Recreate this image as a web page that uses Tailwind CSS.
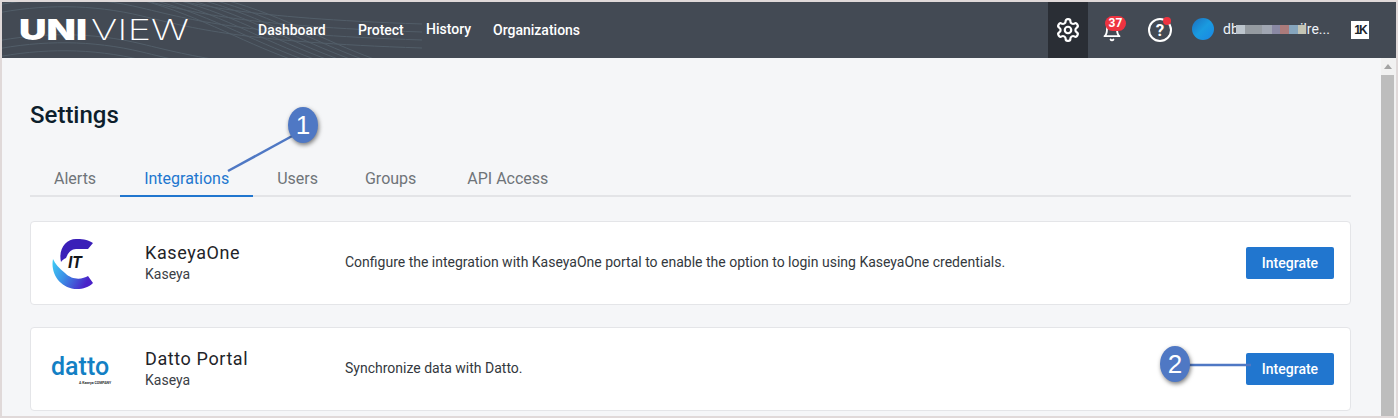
<!DOCTYPE html>
<html lang="en">
<head>
    <meta charset="UTF-8">
    <title>Settings - Integrations</title>
    <script src="https://cdn.jsdelivr.net/npm/@tailwindcss/browser@4"></script>
</head>
<body class="font-['Roboto',sans-serif] bg-[#e0d9d9] overflow-hidden">
    <div class="relative h-[418px] border-2 border-[#e0d9d9] overflow-hidden">
        <!-- Header -->
        <header class="relative h-[56px] bg-[#434a54] flex items-stretch text-white overflow-hidden">
            <svg class="absolute left-0 top-0" width="420" height="56" viewBox="0 0 420 56" fill="none" stroke="#525e69" stroke-width="1">
                <defs>
                    <path id="wave-a" d="M-10 12 C40 2 90 2 140 14 S240 40 420 46"/>
                    <path id="wave-b" d="M100 -10 C170 0 220 30 270 50 S330 70 360 70"/>
                </defs>
                <use href="#wave-a" y="-24"/><use href="#wave-a" y="-16"/><use href="#wave-a" y="-8"/><use href="#wave-a"/>
                <use href="#wave-a" y="28"/><use href="#wave-a" y="36"/><use href="#wave-a" y="44"/>
                <use href="#wave-b" x="0"/><use href="#wave-b" x="12"/><use href="#wave-b" x="24"/><use href="#wave-b" x="36"/>
                <use href="#wave-b" x="48"/><use href="#wave-b" x="60"/><use href="#wave-b" x="72"/><use href="#wave-b" x="84"/>
            </svg>
            <svg class="absolute left-[17px] top-[4px]" width="172" height="44" viewBox="0 0 172 44">
                <text x="0" y="34" textLength="68" lengthAdjust="spacingAndGlyphs" font-family="Inter" font-weight="900" font-size="28" fill="#fff">UNI</text>
                <text x="72" y="34" textLength="98" lengthAdjust="spacingAndGlyphs" font-family="Inter" font-weight="200" font-size="28" fill="#fff">VIEW</text>
            </svg>
            <nav class="relative ml-[256px] flex items-center text-sm font-medium">
                <a class="w-[100px] -mt-[1px]">Dashboard</a>
                <a class="w-[68px] -mt-[1px]">Protect</a>
                <a class="w-[67px] -mt-[3px]">History</a>
                <a class="-mt-[1px]">Organizations</a>
            </nav>
            <div class="relative ml-auto flex items-stretch">
                <div class="w-[40px] bg-[#2a2e35] flex items-center justify-center">
                    <svg class="w-[26px] h-[26px]" viewBox="0 0 24 24" fill="none" stroke="#fff" stroke-width="2" stroke-linecap="round" stroke-linejoin="round">
                        <path d="M12.22 2h-.44a2 2 0 0 0-2 2v.18a2 2 0 0 1-1 1.73l-.43.25a2 2 0 0 1-2 0l-.15-.08a2 2 0 0 0-2.73.73l-.22.38a2 2 0 0 0 .73 2.73l.15.1a2 2 0 0 1 1 1.72v.51a2 2 0 0 1-1 1.74l-.15.09a2 2 0 0 0-.73 2.73l.22.38a2 2 0 0 0 2.73.73l.15-.08a2 2 0 0 1 2 0l.43.25a2 2 0 0 1 1 1.73V20a2 2 0 0 0 2 2h.44a2 2 0 0 0 2-2v-.18a2 2 0 0 1 1-1.73l.43-.25a2 2 0 0 1 2 0l.15.08a2 2 0 0 0 2.73-.73l.22-.39a2 2 0 0 0-.73-2.73l-.15-.08a2 2 0 0 1-1-1.74v-.5a2 2 0 0 1 1-1.74l.15-.09a2 2 0 0 0 .73-2.73l-.22-.38a2 2 0 0 0-2.73-.73l-.15.08a2 2 0 0 1-2 0l-.43-.25a2 2 0 0 1-1-1.73V4a2 2 0 0 0-2-2z"/>
                        <circle cx="12" cy="12" r="3"/>
                    </svg>
                </div>
                <div class="relative w-[48px]">
                    <svg class="absolute left-[14px] top-[20px] w-[20px] h-[20px]" viewBox="0 0 24 24" fill="none" stroke="#fff" stroke-width="2.2" stroke-linecap="round" stroke-linejoin="round">
                        <path d="M6 8a6 6 0 0 1 12 0c0 7 3 9 3 9H3s3-2 3-9"/>
                        <path d="M10.3 21a1.94 1.94 0 0 0 3.4 0"/>
                    </svg>
                    <span class="absolute left-[17px] top-[14px] w-[21px] h-[15px] rounded-full bg-[#ee3340] text-white text-xs font-bold leading-[15px] text-center">37</span>
                </div>
                <div class="relative w-[48px]">
                    <svg class="absolute left-[11px] top-[15px]" width="26" height="26" viewBox="0 0 26 26" fill="none" stroke="#fff" stroke-width="2">
                        <circle cx="13" cy="13" r="11"/>
                    </svg>
                    <span class="absolute left-[11px] top-[15px] w-[26px] h-[26px] text-center text-[17px] font-bold leading-[26px]">?</span>
                    <span class="absolute left-[27px] top-[15px] w-[8px] h-[8px] rounded-full bg-[#ee3340]"></span>
                </div>
                <div class="w-[22px] h-[22px] mt-[16px] ml-[8px] rounded-full bg-gradient-to-br from-[#1b6fbe] via-[#1a9be0] to-[#1b86e4]"></div>
                <div class="relative w-[107px] ml-[9px] text-sm leading-[56px] -mt-[1px] text-[#eef3f8]">
                    <span>db</span>
                    <span class="absolute left-[77px] top-0">ilre...</span>
                    <div class="absolute left-[13px] top-[24px] h-[9px] flex">
                        <i class="block w-[9px] bg-[#bcc5cd]"></i><i class="block w-[17px] bg-[#959ba1]"></i><i class="block w-[10px] bg-[#a0a6b2]"></i><i class="block w-[8px] bg-[#8a89a4]"></i><i class="block w-[9px] bg-[#ab7b7b]"></i><i class="block w-[9px] bg-[#86a5bd]"></i><i class="block w-[8px] bg-[#c4c4b4]"></i>
                    </div>
                </div>
                <div class="w-[66px] pl-[21px] pt-[19px]">
                    <span class="block w-[18px] h-[18px] bg-white text-[#20262c] text-[12px] font-bold leading-[18px] text-center tracking-[-2px] font-['Liberation_Sans',sans-serif]">1K</span>
                </div>
            </div>
        </header>

        <div class="flex h-[358px]">
            <!-- Main -->
            <main class="w-[1379px] shrink-0 bg-[#f5f6f8] pl-[28px] pr-[30px] overflow-hidden">
                <h1 class="pt-[42px] text-2xl leading-[30px] font-medium text-[#0d1e2c]">Settings</h1>
                <div class="mt-[26px] flex h-[41px] border-b-2 border-[#e3e4e7] text-base text-[#6f7479]">
                    <a class="px-6 pt-[11px]">Alerts</a>
                    <a class="px-6 pt-[11px] text-[#2176cf] border-b-2 border-[#2176cf] h-[41px]">Integrations</a>
                    <a class="px-6 pt-[11px]">Users</a>
                    <a class="pl-[23px] pr-6 pt-[11px]">Groups</a>
                    <a class="pl-[27px] pr-6 pt-[11px]">API Access</a>
                </div>

                <div class="mt-[24px] h-[84px] bg-white border border-[#e4e5e8] rounded flex items-center">
                    <div class="w-[114px] shrink-0 pl-[20px]">
                        <div class="relative w-[44px] h-[52px]">
                            <svg width="44" height="52" viewBox="50 236 44 52">
                                <defs>
                                    <linearGradient id="it-grad" x1="0" y1="0" x2="1" y2="0.4">
                                        <stop offset="0" stop-color="#3fd0f5"/>
                                        <stop offset="0.45" stop-color="#3b8fe6"/>
                                        <stop offset="1" stop-color="#4a22c8"/>
                                    </linearGradient>
                                </defs>
                                <path fill="url(#it-grad)" d="M52 258C49 273 60 288 76 288C82 288 88 286 92 282L87 275C82 278 72 280 64 272C58 267 54 263 52 258Z"/>
                                <path fill="#3a1fb8" d="M92 242C86 238 80 238 75 238C65 238 57 248 60 261C61 259 63 258 65 257C67 252 70 248 75 248C80 248 84 248 87 248Z"/>
                            </svg>
                            <span class="absolute left-[17px] top-[17px] text-[16px] leading-[18px] font-bold italic text-[#14161a]">IT</span>
                        </div>
                    </div>
                    <div class="w-[200px] shrink-0 pb-[1px]">
                        <div class="text-lg leading-[24px] tracking-[0.6px] text-[#1f2429]">KaseyaOne</div>
                        <div class="text-sm leading-[19px] text-[#3b4046]">Kaseya</div>
                    </div>
                    <p class="flex-1 text-sm text-[#33383d] pb-[3px]">Configure the integration with KaseyaOne portal to enable the option to login using KaseyaOne credentials.</p>
                    <button class="mr-[16px] w-[88px] h-[32px] rounded-[2px] bg-[#2176cf] text-white text-sm font-medium">Integrate</button>
                </div>

                <div class="mt-[22px] h-[84px] bg-white border border-[#e4e5e8] rounded flex items-center">
                    <div class="w-[114px] shrink-0 pl-[20px]">
                        <div class="text-[25px] leading-[26px] font-medium text-[#1380c4] pt-[1px]">datto</div>
                        <div class="text-[3.5px] leading-[6px] pl-[28px] font-bold text-[#2b2f33] whitespace-nowrap">A Kaseya COMPANY</div>
                    </div>
                    <div class="w-[200px] shrink-0 pb-[1px]">
                        <div class="text-lg leading-[24px] tracking-[0.6px] text-[#1f2429]">Datto Portal</div>
                        <div class="text-sm leading-[19px] text-[#3b4046]">Kaseya</div>
                    </div>
                    <p class="flex-1 text-sm text-[#33383d] pb-[3px]">Synchronize data with Datto.</p>
                    <button class="mr-[16px] w-[88px] h-[32px] rounded-[2px] bg-[#2176cf] text-white text-sm font-medium">Integrate</button>
                </div>
            </main>

            <!-- Scrollbar -->
            <div class="flex-1 bg-[#f1f1f1] flex flex-col items-stretch">
                <div class="h-[17px] flex items-center justify-center pr-[2px]">
                    <span class="w-0 h-0 border-x-[4px] border-x-transparent border-b-[5px] border-b-[#a3a3a3]"></span>
                </div>
                <div class="flex-1 bg-[#bdbdbd] mr-[2px]"></div>
            </div>
        </div>

        <!-- Annotations -->
        <svg class="absolute left-0 top-0 pointer-events-none" width="1394" height="414" fill="none" stroke="#4f78c4" stroke-width="2.5">
            <path d="M226 169L292 133"/>
            <path d="M1186 363H1249"/>
        </svg>
        <div class="absolute left-[286px] top-[105px] w-[30px] h-[36px] rounded-[50%] bg-[#4f78c4] shadow-[1px_2px_4px_rgba(0,0,0,0.5)] text-white text-[26px] leading-[36px] text-center font-['Liberation_Sans',sans-serif]">1</div>
        <div class="absolute left-[1158px] top-[344px] w-[30px] h-[36px] rounded-[50%] bg-[#4f78c4] shadow-[1px_2px_4px_rgba(0,0,0,0.5)] text-white text-[26px] leading-[36px] text-center font-['Liberation_Sans',sans-serif]">2</div>
    </div>
</body>
</html>
